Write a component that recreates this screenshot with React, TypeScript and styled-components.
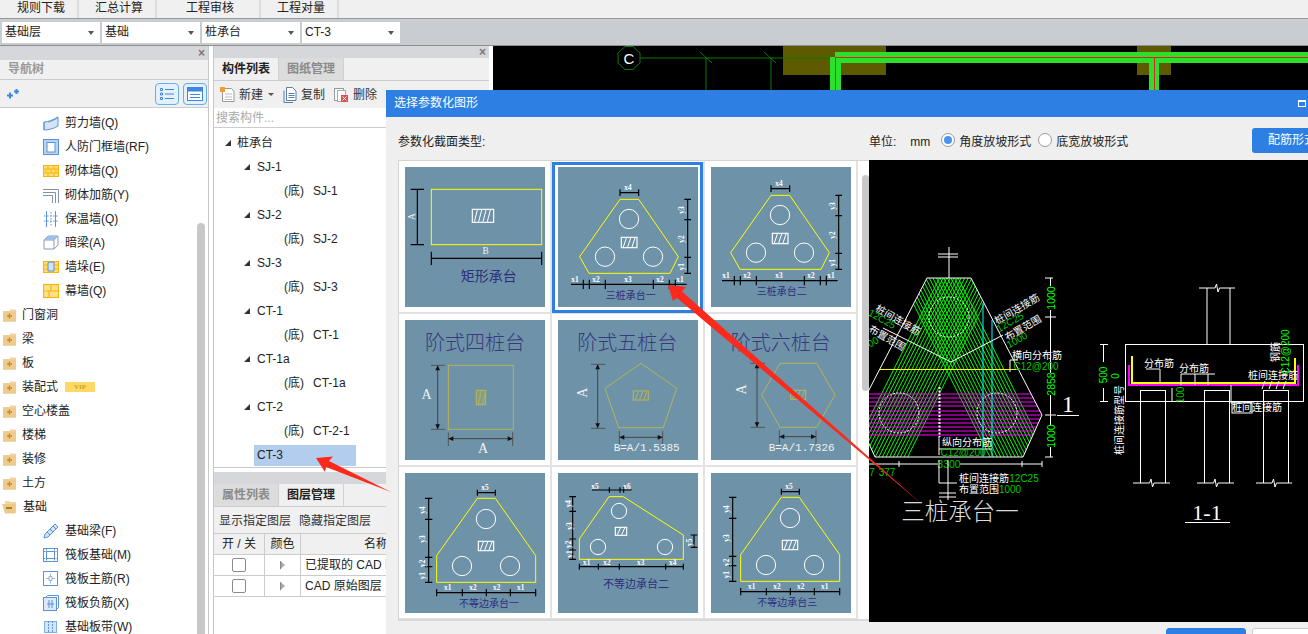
import React from 'react';
import styled, { createGlobalStyle } from 'styled-components';

const FONT = '"Liberation Sans", "Noto Sans CJK SC", sans-serif';

const Global = createGlobalStyle`
  html, body { margin: 0; padding: 0; width: 1308px; height: 634px; overflow: hidden; background: #fff; }
  * { box-sizing: border-box; }
`;

const Page = styled.div`
  position: relative; width: 1308px; height: 634px; overflow: hidden;
  font: 12px/1 ${FONT}; color: #222; display: flex; flex-direction: column; background: #fff;
`;
const MenuBar = styled.div`
  height: 19px; flex: none; background: #f0f0f0; border-bottom: 1px solid #9a9a9a; display: flex;
`;
const MenuItem = styled.div<{ $w: number; $pad: number }>`
  width: ${p => p.$w}px; padding-left: ${p => p.$pad}px; height: 18px; line-height: 17px; white-space: nowrap;
  border-right: 2px solid #dcdcdc;
`;
const ComboBar = styled.div`
  height: 27px; flex: none; background: #c9ccd1; border-bottom: 1px solid #8f8f8f;
  display: flex; gap: 2px; padding: 3px 0 0 2px;
`;
const Combo = styled.div`
  width: 98px; height: 21px; background: #fff; padding-left: 3px; line-height: 21px; position: relative;
  &::after {
    content: ''; position: absolute; right: 6px; top: 9px;
    border: 3.5px solid transparent; border-top: 4px solid #555; border-bottom: 0;
  }
`;
const Main = styled.div`
  flex: 1; min-height: 0; display: flex;
`;
const LeftPanel = styled.div`
  width: 209px; flex: none; border-right: 1px solid #c8c8c8; display: flex; flex-direction: column; position: relative;
`;
const PaneHead = styled.div<{ $h: number }>`
  height: ${p => p.$h}px; flex: none; background: #d6d7db; position: relative; color: #777;
  font-size: 12px; line-height: ${p => p.$h}px; text-align: right; padding-right: 3px; font-weight: bold;
`;
const NavTitle = styled.div`
  height: 20px; flex: none; background: #f0f0f0; border-bottom: 1px solid #ccc; color: #999;
  font-weight: bold; padding-left: 8px; line-height: 19px;
`;
const NavTools = styled.div`
  height: 28px; flex: none; background: #f0f0f0; border-bottom: 1px solid #ccc;
  display: flex; align-items: center; gap: 4px; padding-left: 7px;
`;
const ToolToggle = styled.div<{ $first?: boolean }>`
  width: 24px; height: 22px; border: 1px solid #62aef0; border-radius: 4px; background: #e4f1fc;
  display: flex; align-items: center; justify-content: center; margin-left: ${p => (p.$first ? 'auto' : '0')};
  margin-right: ${p => (p.$first ? '0' : '1px')};
`;
const NavList = styled.div`
  flex: 1; min-height: 0; overflow: hidden; padding-top: 3px; background: #fff;
`;
const NavRow = styled.div<{ $child?: boolean }>`
  height: 24px; display: flex; align-items: center; white-space: nowrap;
  padding-left: ${p => (p.$child ? 43 : 3)}px; gap: ${p => (p.$child ? 6 : 5)}px;
`;
const Vip = styled.span`
  width: 30px; height: 10px; margin-left: 2px; background: #ffd966; color: #c9a227;
  font: bold 7px/10px "Liberation Serif", serif; text-align: center;
`;
const Scroll = styled.div<{ $x: number; $y: number; $h: number; $w: number }>`
  position: absolute; left: ${p => p.$x}px; top: ${p => p.$y}px; width: ${p => p.$w}px; height: ${p => p.$h}px;
  background: #c8c8c8; border-radius: 4px;
`;
const MidPanel = styled.div`
  width: 276px; margin: 0 4px; flex: none; border-left: 1px solid #c8c8c8; display: flex; flex-direction: column;
`;
const TabRow = styled.div`
  height: 23px; flex: none; background: #f0f0f0; border-bottom: 1px solid #ccc; display: flex;
`;
const Tab = styled.div<{ $on?: boolean }>`
  width: 65px; height: 22px; line-height: 22px; text-align: center; font-weight: bold;
  background: ${p => (p.$on ? '#f0f0f0' : '#dcdcdc')}; color: ${p => (p.$on ? '#222' : '#8a8a8a')};
  border-right: 1px solid #d0d0d0;
`;
const MidTools = styled.div`
  height: 27px; flex: none; background: #f0f0f0; display: flex; align-items: center; padding-left: 6px;
`;
const ToolBtn = styled.span<{ $gap?: number; $ml?: number }>`
  display: inline-flex; align-items: center; gap: ${p => p.$gap ?? 5}px; margin-left: ${p => p.$ml ?? 0}px; color: #333;
`;
const Caret = styled.span`
  margin-left: 2px; border: 3px solid transparent; border-top: 3px solid #555; border-bottom: 0;
`;
const Search = styled.div`
  height: 20px; flex: none; background: #fff; border-bottom: 1px solid #ccc; color: #aaa;
  padding-left: 2px; line-height: 20px;
`;
const Tree = styled.div`
  height: 340px; flex: none; border-bottom: 1px solid #c8c8c8; padding-top: 3px; overflow: hidden; background: #fff;
`;
const TreeRow = styled.div<{ $level: number }>`
  height: 24px; display: flex; align-items: center; white-space: nowrap; gap: ${p => (p.$level === 0 ? 6 : p.$level === 1 ? 7 : 4)}px;
  padding-left: ${p => [11, 30, 70][p.$level]}px;
`;
const Tri = styled.span`
  width: 6px; height: 6px; background: #333; clip-path: polygon(100% 0, 100% 100%, 0 100%); flex: none;
`;
const SelSpacer = styled.span`
  width: 6px; flex: none;
`;
const TreeLabel = styled.span<{ $sel?: boolean }>`
  ${p => p.$sel ? 'background:#b3cdee; width:102px; height:21px; line-height:21px; padding-left:3px; margin-left:-3px;' : ''}
`;
const Paren = styled.span`
  margin-right: 5px;
`;
const LowerGap = styled.div`
  height: 4px; flex: none;
`;
const LayerTools = styled.div`
  height: 27px; flex: none; background: #f0f0f0; border-bottom: 1px solid #ccc; display: flex; gap: 8px;
  align-items: center; padding: 1px 0 0 5px; color: #333;
`;
const Table = styled.div`
  display: grid; grid-template-columns: 51px 36px 189px; grid-auto-rows: 21px; background: #fff;
`;
const Th = styled.div<{ $right?: boolean }>`
  background: #f0f0f0; border-right: 1px solid #ccc; border-bottom: 1px solid #ccc; line-height: 20px;
  height: 21px; text-align: ${p => (p.$right ? 'left' : 'center')}; padding-left: ${p => (p.$right ? 63 : 0)}px; white-space: nowrap;
`;
const Td = styled.div`
  border-right: 1px solid #ccc; border-bottom: 1px solid #ccc; height: 21px; display: flex; align-items: center;
  justify-content: center;
`;
const TdText = styled(Td)`
  justify-content: flex-start; padding-left: 4px; white-space: nowrap; overflow: hidden;
`;
const Check = styled.span`
  width: 14px; height: 14px; border: 1px solid #8a8a8a; border-radius: 2px; background: #fff;
`;
const OpenArrow = styled.span`
  width: 5px; height: 9px; position: relative;
  border-left: 1px solid #888; clip-path: polygon(0 0, 100% 50%, 0 100%);
  background: #aaa;
`;
const Canvas = styled.div`
  flex: 1; min-width: 0; background: #000; height: 44px;
`;
const CanvasSvg = styled.svg`
  display: block;
`;

const Dialog = styled.div`
  position: absolute; left: 386px; top: 90px; right: 0; bottom: 0; background: #efefef; overflow: hidden;
  display: flex; flex-direction: column;
`;
const DlgTitle = styled.div`
  height: 27px; flex: none; background: #2d7fe3; color: #fff; line-height: 27px; padding: 0 2px 0 8px;
  display: flex; justify-content: space-between; align-items: center;
`;
const MaxIcon = styled.span`
  width: 8px; height: 7px; border: 1px solid #fff; border-top-width: 2px;
`;
const DlgTop = styled.div`
  height: 43px; flex: none; padding-left: 12px; display: flex; align-items: center;
`;
const DlgLabel = styled.div`
  width: 471px; flex: none; color: #222; padding-top: 7px;
`;
const Unit = styled.div`
  display: flex; align-items: center; padding-top: 7px;
`;
const UnitValue = styled.span`
  margin-left: 14px;
`;
const Radio = styled.span<{ $on?: boolean }>`
  width: 14px; height: 14px; border-radius: 50%; border: 1px solid #999; background: #fff;
  margin: -4px 4px 0 ${p => (p.$on ? 11 : 7)}px;
  display: flex; align-items: center; justify-content: center;
  &::after { content: ''; width: 8px; height: 8px; border-radius: 50%; background: ${p => (p.$on ? '#4a93ee' : 'transparent')}; }
`;
const Primary = styled.div`
  width: 80px; height: 25px; margin-left: auto; margin-right: -24px; margin-top: 4px; background: #2d7fe3; color: #fff; border-radius: 3px;
  line-height: 25px; padding-left: 16px; flex: none; white-space: nowrap;
`;
const DlgBody = styled.div`
  height: 462px; flex: none; padding-left: 12px; display: flex;
`;
const GridBox = styled.div`
  width: 471px; height: 461px; flex: none; background: #fff; border-top: 1px solid #d4d4d4; border-left: 1px solid #d4d4d4;
  border-bottom: 2px solid #d8d8d8; position: relative; overflow: hidden;
`;
const ThumbGrid = styled.div`
  display: grid; grid-template-columns: repeat(3, 153px); grid-auto-rows: 153px;
`;
const Cell = styled.div<{ $sel?: boolean }>`
  position: relative; padding: 6px 0 0 6px; border-right: 2px solid #e2e2e2; border-bottom: 2px solid #e2e2e2;
  ${p => p.$sel ? `&::after { content: ''; position: absolute; left: 0; top: 1px; right: 0; bottom: -1px; border: 3px solid #2d7fe3; }` : ''}
`;
const ThumbSvg = styled.svg`
  display: block; width: 140px; height: 140px; background: #6e93a9;
`;
const Preview = styled.div`
  flex: 1; min-width: 0; background: #000; height: 462px;
`;
const PreviewSvg = styled.svg`
  display: block; width: 439px; height: 462px;
`;
const DlgFoot = styled.div`
  flex: 1; display: flex; gap: 6px; padding: 6px 0 0 780px;
`;
const FootBtn = styled.div<{ $white?: boolean }>`
  width: 80px; height: 24px; flex: none; border-radius: 3px;
  background: ${p => (p.$white ? '#fff' : '#2d7fe3')}; border: 1px solid ${p => (p.$white ? '#ccc' : '#2d7fe3')};
`;
const Overlay = styled.svg`
  position: absolute; left: 0; top: 0; width: 1308px; height: 634px; pointer-events: none;
`;
const CadLabel = styled.text<{ $size: number; $serif?: boolean; $thin?: boolean }>`
  font-family: ${p => (p.$serif ? '"Liberation Serif", "Noto Sans CJK SC", serif' : FONT)};
  font-size: ${p => p.$size}px; text-anchor: middle; dominant-baseline: central;
  font-weight: ${p => (p.$thin ? 300 : 400)};
`;
const DimText = styled.text`
  font: bold 22px "Liberation Serif", serif; fill: #fff; text-anchor: middle; dominant-baseline: central;
`;
const ThumbTitle = styled.text<{ $size: number }>`
  font-family: "Noto Sans CJK SC", sans-serif; font-size: ${p => p.$size}px; fill: #2f2d7c; text-anchor: middle; dominant-baseline: central;
`;
const BigTitle = styled.text`
  font-family: "Noto Sans CJK SC", sans-serif; font-weight: 300; font-size: 60px; fill: #38397f; text-anchor: middle; dominant-baseline: central;
`;
const FormulaText = styled.text`
  font: 33px "Liberation Mono", monospace; fill: #f2f2f2; text-anchor: middle; dominant-baseline: central;
`;
const SerifA = styled.text<{ $size?: number }>`
  font: ${p => p.$size ?? 42}px "Liberation Serif", serif; fill: #f2f2f2; text-anchor: middle; dominant-baseline: central;
`;

/* ---------- small icons ---------- */
const IconBox = styled.svg`
  flex: none;
`;
const I = ({ children }: { children: React.ReactNode }) => (
  <IconBox width="16" height="16" viewBox="0 0 16 16" fill="none">{children}</IconBox>
);
const B = '#5b93d8';
const Y = '#f6b60c';
const icons: Record<string, React.ReactNode> = {
  shear: <I><path d="M1 7c4 0 9-2 14-5v9c-5 3-10 4-14 4z" fill="#d5e4f5" stroke={B} /><path d="M1 7v8M5 7c4-1 7-2 10-5" stroke={B} /></I>,
  door: <I><rect x="0.5" y="0.5" width="15" height="15" fill="#b9d4f1" stroke={B} /><rect x="4" y="3.5" width="8" height="9.5" fill="#fff" stroke={B} /></I>,
  brick: <I><rect x="0.5" y="2.5" width="15" height="11" fill="#ffdc74" stroke={Y} /><path d="M1 6h14M1 10h14M5 3v3M11 3v3M8 6v4M3 6v4M13 6v4M5 10v3M11 10v3" stroke={Y} /></I>,
  rebar: <I><path d="M0 2.5h15.5V16M0 5.5h12.500V16M0 8.500h9.500V16" stroke="#7d93a8" /></I>,
  heat: <I><path d="M3.500 0v16M12.500 0v16" stroke={B} /><path d="M8 1v14M1 5h14M1 10h14" stroke={B} strokeDasharray="1.500 1.500" /></I>,
  beam: <I><path d="M1 5l4-4h10v9l-4 4H1z" fill="#fff" stroke="#8a9db0" /><path d="M1 5h10v9M11 5l4-4" stroke="#8a9db0" /><path d="M5 1h10L11 5H1z" fill="#9cc2ea" /></I>,
  pier: <I><rect x="0.5" y="2.500" width="15" height="11" fill="#ffdc74" stroke={Y} /><path d="M1 6h14M1 10h14" stroke={Y} /><path d="M5 4l2-1h4v9H5z" fill="#cfe2f6" stroke={B} /></I>,
  curtain: <I><rect x="0.500" y="1.500" width="15" height="13" fill="#ffe08a" stroke={Y} strokeWidth="1.200" /><path d="M8 2v6M1 8h14M6 8v6" stroke={Y} strokeWidth="1.200" /></I>,
  fbeam: <I><path d="M1 15l1-4L12 1l3 3L5 14z" fill="#cfe2f6" stroke={B} /><path d="M4 9l3 3M7 6l3 3M10 3l3 3" stroke={B} /></I>,
  raft: <I><rect x="0.500" y="1.500" width="14" height="13" fill="#fff" stroke={B} /><rect x="3.500" y="4.500" width="8" height="7" stroke={B} /><path d="M1 4.500h14M1 11.500h14M3.500 2v12M11.500 2v12" stroke={B} strokeDasharray="1.500 1" /></I>,
  rmain: <I><rect x="0.500" y="0.500" width="14" height="14" fill="#fff" stroke={B} /><path d="M7.500 2.500v3M7.500 9.500v3M3 7.500h3M9 7.500h3M6 5.500h3v4H6z" stroke="#9ab3cc" /></I>,
  rneg: <I><path d="M2.500 2.500l2-2h11v12l-2 2" stroke={B} /><rect x="0.500" y="2.500" width="13" height="13" fill="#dbe9f8" stroke={B} /><path d="M4 9h7M6 5v8M9 5v8" stroke={B} /></I>,
  band: <I><rect x="1.500" y="2.500" width="12" height="11" fill="#d5e5f7" stroke="#7db0e6" /><path d="M5.500 2v12M9.500 2v12" stroke="#5b93d8" strokeDasharray="2 1" /></I>,
};
const FolderIcon = styled.svg<{ $open?: boolean }>`
  flex: none; margin-left: ${p => (p.$open ? -1 : 0)}px;
`;
const Folder = ({ open }: { open?: boolean }) => (
  <FolderIcon $open={open} width={open ? 16 : 14} height="14" viewBox={open ? '0 0 16 14' : '0 0 14 14'}>
    {open ? <>
      <path d="M3 1h4l1 1h6v11H4z" fill="#f1d59e" />
      <path d="M0 4h14l-1 9.500H3z" fill="#edc988" />
      <rect x="4" y="7" width="6" height="2" fill="#a37c3c" />
    </> : <>
      <path d="M0 3h7V1.500h6V14H0z" fill="#ecd6a6" />
      <path d="M0 3.500h13V13H0z" fill="#eecb8d" />
      <path d="M4 8h5M6.500 5.500v5" stroke="#c98a2e" strokeWidth="1.400" />
    </>}
  </FolderIcon>
);

/* ---------- data ---------- */
const navItems: { t: string; i?: string; f?: boolean; open?: boolean; vip?: boolean }[] = [
  { t: '剪力墙(Q)', i: 'shear' }, { t: '人防门框墙(RF)', i: 'door' }, { t: '砌体墙(Q)', i: 'brick' },
  { t: '砌体加筋(Y)', i: 'rebar' }, { t: '保温墙(Q)', i: 'heat' }, { t: '暗梁(A)', i: 'beam' },
  { t: '墙垛(E)', i: 'pier' }, { t: '幕墙(Q)', i: 'curtain' },
  { t: '门窗洞', f: true }, { t: '梁', f: true }, { t: '板', f: true }, { t: '装配式', f: true, vip: true },
  { t: '空心楼盖', f: true }, { t: '楼梯', f: true }, { t: '装修', f: true }, { t: '土方', f: true },
  { t: '基础', f: true, open: true },
  { t: '基础梁(F)', i: 'fbeam' }, { t: '筏板基础(M)', i: 'raft' }, { t: '筏板主筋(R)', i: 'rmain' },
  { t: '筏板负筋(X)', i: 'rneg' }, { t: '基础板带(W)', i: 'band' },
];
const treeItems: { t: string; l: number; sel?: boolean }[] = [
  { t: '桩承台', l: 0 },
  { t: 'SJ-1', l: 1 }, { t: 'SJ-1', l: 2 }, { t: 'SJ-2', l: 1 }, { t: 'SJ-2', l: 2 },
  { t: 'SJ-3', l: 1 }, { t: 'SJ-3', l: 2 }, { t: 'CT-1', l: 1 }, { t: 'CT-1', l: 2 },
  { t: 'CT-1a', l: 1 }, { t: 'CT-1a', l: 2 }, { t: 'CT-2', l: 1 }, { t: 'CT-2-1', l: 2 },
  { t: 'CT-3', l: 1, sel: true },
];

/* ---------- thumbnails (420 unit box = 140 px) ---------- */
const hd = (y: number, ticks: number[], h = 12, x1?: number, x2?: number) =>
  `M${x1 ?? ticks[0]} ${y}H${x2 ?? ticks[ticks.length - 1]}` + ticks.map(t => `M${t} ${y - h}V${y + h}`).join('');
const vd = (x: number, ticks: number[], w = 12) =>
  `M${x} ${ticks[0]}V${ticks[ticks.length - 1]}` + ticks.map(t => `M${x - w} ${t}H${x + w}`).join('');

const Hatch = ({ x, y, w, h, c = '#fff' }: { x: number; y: number; w: number; h: number; c?: string }) => {
  const n = Math.floor(w / 13);
  let d = '';
  for (let i = 0; i < n; i++) d += `M${x + 6 + i * 13} ${y + h - 2}L${x + 6 + i * 13 + 9} ${y + 2}`;
  return <>
    <rect x={x} y={y} width={w} height={h} fill="none" stroke={c} strokeWidth="3.500" />
    <path d={d} stroke={c} strokeWidth="3" />
  </>;
};
const Pile = ({ x, y, r = 29 }: { x: number; y: number; r?: number }) =>
  <circle cx={x} cy={y} r={r} fill="none" stroke="#fff" strokeWidth="3" />;
const Labels = ({ items }: { items: [string, number, number, boolean?][] }) => <>
  {items.map(([s, x, y, rot], i) =>
    <DimText key={i} x={x} y={y} transform={rot ? `rotate(-90 ${x} ${y})` : undefined}>{s}</DimText>)}
</>;

const Rect1 = () => <>
  <rect x="79" y="67" width="331" height="166" fill="none" stroke="#ffff00" strokeWidth="3" />
  <path d={vd(37, [67, 233], 20)} stroke="#000" strokeWidth="3.500" />
  <path d={hd(274, [79, 410], 20)} stroke="#000" strokeWidth="3.500" />
  <Hatch x={202} y={127} w={64} h={39} />
  <SerifA $size={28} x={20} y={149} transform="rotate(-90 20 149)">A</SerifA>
  <SerifA $size={28} x={242} y={253}>B</SerifA>
  <ThumbTitle $size={42} x={251} y={324}>矩形承台</ThumbTitle>
</>;
const ThreePile = ({ dx = 0, dy = 0, by = 0, title, tx, ty }: { dx?: number; dy?: number; by?: number; title: string; tx: number; ty: number }) => (
  <>
    <g transform={`translate(${dx} ${dy})`}>
      <polygon points="186,97 242,97 361,269 336,319 93,319 65,269" fill="none" stroke="#ffff00" strokeWidth="3" />
      <Pile x={213} y={156} /><Pile x={141} y={269} /><Pile x={285} y={269} />
      <Hatch x={190} y={211} w={47} h={31} />
      <path d={hd(77, [186, 242], 10)} stroke="#000" strokeWidth="3.500" />
      <path d={vd(389, [97, 158, 271, 319], 10)} stroke="#000" strokeWidth="3.500" />
      <Labels items={[['x4', 210, 62], ['y3', 371, 129, true], ['y2', 371, 216, true], ['y1', 371, 299, true]]} />
    </g>
    <g transform={`translate(${dx} ${by})`}>
      <path d={hd(352, [76, 94, 142, 286, 334, 352], 14, 39, 386)} stroke="#000" strokeWidth="3.500" />
      <Labels items={[['x1', 51, 337], ['x2', 114, 337], ['x3', 210, 337], ['x2', 306, 337], ['x1', 366, 337]]} />
    </g>
    <ThumbTitle $size={30} x={tx} y={ty}>{title}</ThumbTitle>
  </>
);
const Arrowed = ({ x1, y1, x2, y2 }: { x1: number; y1: number; x2: number; y2: number }) => {
  const vertical = x1 === x2;
  return <>
    <line x1={x1} y1={y1} x2={x2} y2={y2} stroke="#444" strokeWidth="3" />
    {vertical
      ? <path d={`M${x1} ${y1}l-7 15h14zM${x1} ${y2}l-7 -15h14z`} fill="#111" />
      : <path d={`M${x1} ${y1}l15 -7v14zM${x2} ${y1}l-15 -7v14z`} fill="#111" />}
  </>;
};
const OL = '#b3b357';
const Step4 = () => <>
  <BigTitle x={210} y={65}>阶式四桩台</BigTitle>
  <rect x="130" y="136" width="195" height="192" fill="none" stroke={OL} strokeWidth="3" />
  <Hatch x={214} y={211} w={28} h={43} c={OL} />
  <rect x="214" y="211" width="28" height="43" fill={OL} opacity=".35" />
  <Arrowed x1={98} y1={136} x2={98} y2={328} />
  <path d="M78 136h42M78 328h42M130 337v41M323 337v41" stroke="#555" strokeWidth="3" />
  <Arrowed x1={130} y1={356} x2={323} y2={356} />
  <SerifA x={65} y={223}>A</SerifA>
  <SerifA x={234} y={385}>A</SerifA>
</>;
const Step5 = () => <>
  <BigTitle x={208} y={65}>阶式五桩台</BigTitle>
  <polygon points="249,130 356,205 316,323 182,323 141,205" fill="none" stroke={OL} strokeWidth="3" />
  <Hatch x={226} y={213} w={45} h={27} c={OL} />
  <Arrowed x1={119} y1={133} x2={119} y2={325} />
  <path d="M99 133h44M99 325h44M184 333v41M314 333v41" stroke="#555" strokeWidth="3" />
  <Arrowed x1={184} y1={352} x2={314} y2={352} />
  <SerifA x={74} y={218} transform="rotate(-90 74 218)">A</SerifA>
  <FormulaText x={266} y={384}>B=A/1.5385</FormulaText>
</>;
const Step6 = () => <>
  <BigTitle x={209} y={65}>阶式六桩台</BigTitle>
  <polygon points="207,130 317,130 372,225 317,322 207,322 152,225" fill="none" stroke={OL} strokeWidth="3" />
  <Hatch x={239} y={211} w={45} h={27} c={OL} />
  <Arrowed x1={138} y1={130} x2={138} y2={322} />
  <path d="M118 130h44M118 322h44M205 331v41M315 331v41" stroke="#555" strokeWidth="3" />
  <Arrowed x1={205} y1={350} x2={315} y2={350} />
  <SerifA x={92} y={208} transform="rotate(-90 92 208)">A</SerifA>
  <FormulaText x={272} y={384}>B=A/1.7326</FormulaText>
</>;
const Uneq = ({ dx = 0, dy = 0, title, tx, ty }: { dx?: number; dy?: number; title: string; tx: number; ty: number }) => (
  <>
    <g transform={`translate(${dx} ${dy})`}>
      <polygon points="217,76 271,76 392,248 392,328 95,328 95,248" fill="none" stroke="#ffff00" strokeWidth="3" />
      <Pile x={243} y={138} /><Pile x={171} y={279} /><Pile x={315} y={279} />
      <Hatch x={220} y={205} w={46} h={28} />
      <path d={hd(59, [217, 271], 9)} stroke="#000" strokeWidth="3.500" />
      <path d={vd(71, [76, 139, 253, 281, 328], 11)} stroke="#000" strokeWidth="3.500" />
      <path d={hd(359, [95, 172, 244, 316, 392], 11)} stroke="#000" strokeWidth="3.500" />
      <Labels items={[['x5', 240, 44], ['y4', 52, 111, true], ['y3', 52, 198, true], ['y2', 52, 271, true], ['y1', 52, 308, true],
        ['x1', 128, 343], ['x2', 204, 343], ['x2', 275, 343], ['x1', 347, 343]]} />
    </g>
    <ThumbTitle $size={30} x={tx} y={ty}>{title}</ThumbTitle>
  </>
);
const Uneq2 = () => <>
  <polygon points="153,71 196,71 376,186 376,259 64,259 64,198" fill="none" stroke="#ffff00" strokeWidth="3" />
  <Pile x={183} y={114} r={23} /><Pile x={120} y={222} r={23} /><Pile x={321} y={222} r={23} />
  <Hatch x={172} y={163} w={34} h={24} />
  <path d={hd(51, [154, 186, 197], 8, 102, 221)} stroke="#000" strokeWidth="3.500" />
  <path d={vd(44, [71, 115, 198, 231, 259], 10)} stroke="#000" strokeWidth="3.500" />
  <path d={vd(408, [186, 223], 10)} stroke="#000" strokeWidth="3.500" />
  <path d={hd(281, [64, 121, 184, 323, 376], 9)} stroke="#000" strokeWidth="3.500" />
  <Labels items={[['x5', 111, 39], ['x6', 207, 39], ['y4', 33, 92, true], ['y3', 33, 159, true], ['y2', 33, 214, true], ['y1', 33, 243, true],
    ['y5', 394, 208, true], ['x1', 86, 267], ['x2', 147, 267], ['x3', 248, 267], ['x4', 344, 267]]} />
  <ThumbTitle $size={33} x={234} y={331}>不等边承台二</ThumbTitle>
</>;

const thumbs: React.ReactNode[] = [
  <Rect1 />,
  <ThreePile title="三桩承台一" tx={218} ty={382} />,
  <ThreePile dx={-6} dy={-12} by={-11} title="三桩承台二" tx={212} ty={369} />,
  <Step4 />, <Step5 />, <Step6 />,
  <Uneq title="不等边承台一" tx={252} ty={388} />,
  <Uneq2 />,
  <Uneq dx={-6} dy={-3} title="不等边承台三" tx={229} ty={386} />,
];

/* ---------- CAD preview, page coordinates ---------- */
const T = ({ x, y, s = 11, c = '#fff', r = 0, children, serif, thin }: { x: number; y: number; s?: number; c?: string; r?: number; children: React.ReactNode; serif?: boolean; thin?: boolean }) => (
  <CadLabel $size={s} $serif={serif} $thin={thin} x={x} y={y} fill={c} transform={r ? `rotate(${r} ${x} ${y})` : undefined}>{children}</CadLabel>
);
const Break = ({ x1, x2, y }: { x1: number; x2: number; y: number }) => {
  const m = (x1 + x2) / 2;
  return <path d={`M${x1} ${y}H${m - 2}l1.500 -4l1.500 8l1.500 -4H${x2}`} stroke="#fff" fill="none" />;
};
const hatchLines = (() => {
  const out: string[] = [];
  for (let off = -29; off <= 29; off += 3.6) {
    out.push(`M${949 + off + 0.5 * (260 - 317)} 260L${949 + off + 0.5 * (470 - 317)} 470`);
    out.push(`M${949 + off - 0.5 * (260 - 317)} 260L${949 + off - 0.5 * (470 - 317)} 470`);
  }
  return out.join('');
})();
const magentaYs = [394, 398, 402, 406, 411, 415, 419, 423, 427, 431, 435];
const Cad = () => (
  <PreviewSvg viewBox="869 160 439 462">
    <defs>
      <clipPath id="hex"><polygon points="927,278 971,278 1042,415 1023,457 875,457 856,415" /></clipPath>
    </defs>
    <g clipPath="url(#hex)">
      <path d={hatchLines} stroke="#00ff00" strokeWidth="1" fill="none" />
      <path d={magentaYs.map(y => `M860 ${y}H1045`).join('')} stroke="#ff00ff" strokeWidth="1" />
    </g>
    <polygon points="927,278 971,278 1042,415 1023,457 875,457 856,415" fill="none" stroke="#fff" />
    <path d="M949 247V278M938 254H958M938 257H958" stroke="#fff" />
    <circle cx="949" cy="317" r="20" fill="none" stroke="#fff" strokeDasharray="2 1.500" />
    <circle cx="899" cy="413" r="20" fill="none" stroke="#fff" strokeDasharray="2 1.500" />
    <circle cx="997" cy="413" r="20" fill="none" stroke="#fff" strokeDasharray="2 1.500" />
    <path d="M880 369.500H1018" stroke="#ffff00" />
    <path d="M983 303V457M992 320V457" stroke="#00ffff" />
    <path d="M883 328L951 362L1003 335" stroke="#fff" fill="none" />
    <path d="M939.500 387V437" stroke="#fff" strokeDasharray="2 1.500" strokeWidth="2" />
    <path d="M939 437V455M939 449H992M1018 360H1010V372" stroke="#fff" fill="none" />
    <path d="M1050.500 278V286M1050.500 310V373M1050.500 395V425M1050.500 447V457M1045 278H1053M1045 317H1056M1045 415H1056M1045 457H1053" stroke="#fff" />
    <T x={1050.500} y={298} s={10.500} c="#00ff00" r={-90}>1000</T>
    <T x={1050.500} y={384} s={10.500} c="#00ff00" r={-90}>2858</T>
    <T x={1050.500} y={436} s={10.500} c="#00ff00" r={-90}>1000</T>
    <T x={1068} y={404} s={24} serif>1</T>
    <path d="M1057 415.500H1079" stroke="#fff" />
    <T x={1017} y={309} s={10} r={-30}>桩间连接筋</T>
    <T x={1010} y={322} s={10} r={-30} c="#00c800">12C25</T>
    <T x={1023} y={328} s={10} r={-30}>布置范围</T>
    <T x={1017} y={340} s={10} r={-30} c="#00c800">1000</T>
    <T x={898} y={320} s={10} r={30}>桩间连接筋</T>
    <T x={882} y={319} s={10} r={30} c="#00c800">12C25</T>
    <T x={887} y={338} s={10} r={30}>布置范围</T>
    <T x={873} y={342} s={10} r={-30} c="#00c800">00</T>
    <T x={1037} y={355} s={10}>横向分布筋</T>
    <T x={1036} y={366} s={10} c="#00c800">C12@200</T>
    <T x={967} y={442} s={10}>纵向分布筋</T>
    <T x={963} y={452} s={10} c="#00c800">C12@200</T>
    <path d="M869 464H1042M899 461V467M940 461V467M1022 461V467M1042 461V467" stroke="#fff" />
    <rect x="938" y="458" width="22" height="12" fill="#000" />
    <T x={949} y={464} s={10.500} c="#00c800">3300</T>
    <T x={872} y={472} s={10} c="#00c800">7</T>
    <T x={887} y={472} s={10} c="#00c800">377</T>
    <path d="M939 460V483H957M948 460V500M939 493H956M939 497H956" stroke="#fff" fill="none" />
    <T x={984} y={478} s={10}>桩间连接筋</T>
    <T x={1024} y={478} s={10} c="#00c800">12C25</T>
    <T x={979} y={489} s={10}>布置范围</T>
    <T x={1010} y={489} s={10} c="#00c800">1000</T>
    <T x={960} y={512} s={23.500} c="#dcdcdc" thin>三桩承台一</T>

    {/* section 1-1 */}
    <path d="M1207 288V344M1230 288V344" stroke="#fff" />
    <Break x1={1199} x2={1235} y={288} />
    <rect x="1125.500" y="344.500" width="178" height="57" fill="none" stroke="#fff" />
    <path d="M1129 365V385H1298V365" fill="none" stroke="#ff00ff" strokeWidth="2" />
    <path d="M1132 356V383H1295V358" fill="none" stroke="#ffff00" strokeWidth="2" />
    <path d="M1140.500 390V483M1165.500 390V483M1140 390.500H1166M1204.500 390V483M1229.500 390V483M1204 390.500H1230M1263.500 390V483M1288.500 390V483M1263 390.500H1289" stroke="#fff" />
    <Break x1={1133} x2={1170} y={483} />
    <Break x1={1197} x2={1234} y={483} />
    <Break x1={1256} x2={1292} y={483} />
    <path d="M1103.500 344V402M1100 344.500H1108M1100 401.500H1108" stroke="#fff" />
    <rect x="1098" y="362" width="11" height="26" fill="#000" />
    <T x={1103} y={375} s={10} c="#00ff00" r={-90}>500</T>
    <T x={1115} y={376} s={10} c="#00ff00" r={-90}>0</T>
    <T x={1119} y={420} s={10} r={-90}>桩间连接筋型号</T>
    <T x={1159} y={363} s={10}>分布筋</T>
    <path d="M1146 369H1160V383" stroke="#fff" fill="none" />
    <T x={1194} y={368} s={10}>分布筋</T>
    <path d="M1181 374H1215M1181 374V385M1195 374V385M1208 374V385" stroke="#fff" fill="none" />
    <T x={1273} y={375} s={10}>桩间连接筋</T>
    <path d="M1265 381l-3 8M1272 381l-3 8M1279 381l-3 8M1286 381l-3 8" stroke="#fff" />
    <T x={1180} y={395} s={10} c="#00c800" r={-90}>100</T>
    <path d="M1172 388V401" stroke="#fff" />
    <T x={1275} y={352} s={10} r={-90}>钢筋</T>
    <T x={1285} y={352} s={10} c="#00ff00" r={-90}>C12@200</T>
    <path d="M1231 385V403H1252" stroke="#fff" fill="none" />
    <T x={1257} y={407} s={10}>桩间连接筋</T>
    <rect x="1232" y="402" width="20" height="11" fill="none" stroke="#fff" />
    <T x={1207} y={512} s={22} serif>1-1</T>
    <path d="M1185 522.500H1230" stroke="#fff" />
  </PreviewSvg>
);

const TopCad = () => (
  <CanvasSvg width="815" height="44" viewBox="493 46 815 44">
    <rect x="783" y="46" width="103" height="29" fill="#5e5a00" />
    <rect x="1137" y="46" width="34" height="29" fill="#5e5a00" />
    <path d="M706 58V90M771 58V90M700 52L712 63M764 52L776 63M640 58H836" stroke="#0b7a0b" />
    <polygon points="625,46.500 633,46.500 640,53 640,63 633,69.500 625,69.500 618,63 618,53" fill="none" stroke="#0b7a0b" />
    <CadLabel $size={15} x={629} y={58} fill="#fff">C</CadLabel>
    <path d="M835 52H1308V63H835zM830 57H841V90H830zM1149 63H1159V90H1149z" fill="#2bdf2b" />
    <path d="M835 57.500H1308M835.500 57V90M1154.500 57V90" stroke="#e02020" />
  </CanvasSvg>
);

export default function App() {
  return (
    <Page>
      <Global />
      <MenuBar>
        <MenuItem $w={79} $pad={17}>规则下载</MenuItem>
        <MenuItem $w={78} $pad={16}>汇总计算</MenuItem>
        <MenuItem $w={104} $pad={29}>工程审核</MenuItem>
        <MenuItem $w={78} $pad={16}>工程对量</MenuItem>
      </MenuBar>
      <ComboBar>
        <Combo>基础层</Combo>
        <Combo>基础</Combo>
        <Combo>桩承台</Combo>
        <Combo>CT-3</Combo>
      </ComboBar>
      <Main>
        <LeftPanel>
          <PaneHead $h={14}>×</PaneHead>
          <NavTitle>导航树</NavTitle>
          <NavTools>
            <svg width="12" height="10" viewBox="0 0 12 10">
              <path d="M0 6.500h6M3 3.500v6M7 2.500h5M9.500 0v5" stroke="#3f86dd" strokeWidth="2" />
            </svg>
            <ToolToggle $first>
              <svg width="14" height="14" viewBox="0 0 14 14"><path d="M0.500 1.500h2v2h-2zM0.500 6h2v2h-2zM0.500 10.500h2v2h-2z" fill="none" stroke="#3f86dd" /><path d="M5 2.500h9M5 7h9M5 11.500h9" stroke="#3f86dd" /></svg>
            </ToolToggle>
            <ToolToggle>
              <svg width="16" height="14" viewBox="0 0 16 14"><rect x="0.500" y="0.500" width="15" height="13" fill="#fff" stroke="#3f86dd" /><rect x="0.500" y="0.500" width="15" height="4" fill="#3f86dd" /><path d="M3 7.500h10M3 10.500h10" stroke="#3f86dd" /></svg>
            </ToolToggle>
          </NavTools>
          <NavList>
            {navItems.map((n, i) => (
              <NavRow key={i} $child={!n.f}>
                {n.f ? <Folder open={n.open} /> : icons[n.i!]}
                <span>{n.t}</span>
                {n.vip && <Vip>VIP</Vip>}
              </NavRow>
            ))}
          </NavList>
          <Scroll $x={197} $y={177} $w={8} $h={430} />
        </LeftPanel>
        <MidPanel>
          <PaneHead $h={12}>×</PaneHead>
          <TabRow><Tab $on>构件列表</Tab><Tab>图纸管理</Tab></TabRow>
          <MidTools>
            <ToolBtn $gap={3}>
              <svg width="16" height="16" viewBox="0 0 16 16"><path d="M2.500 1.500h9l2.500 3v10h-11.500z" fill="#fff" stroke="#999" /><path d="M5 7h7M5 10h7M5 12.500h7" stroke="#bbb" /><rect x="0" y="0" width="5" height="5" fill="#f39c34" /></svg>
              新建<Caret />
            </ToolBtn>
            <ToolBtn $ml={9} $gap={4}>
              <svg width="14" height="16" viewBox="0 0 14 16"><path d="M1 3.500v12h9" fill="none" stroke="#5b7fa8" /><path d="M3.500 0.500h6l3.500 3.500v9.500h-9.500z" fill="#fff" stroke="#5b7fa8" /><path d="M5.500 6.500h6M5.500 8.500h6M5.500 10.500h6" stroke="#5b7fa8" /></svg>
              复制
            </ToolBtn>
            <ToolBtn $ml={9}>
              <svg width="14" height="16" viewBox="0 0 14 16"><rect x="0.500" y="1.500" width="9" height="12" fill="#fff" stroke="#999" /><rect x="3.500" y="3.500" width="8" height="11" fill="#fff" stroke="#aaa" /><rect x="7" y="8" width="7" height="7" fill="#e04b4b" /><path d="M8.500 9.500l4 4M12.500 9.500l-4 4" stroke="#fff" /></svg>
              删除
            </ToolBtn>
          </MidTools>
          <Search>搜索构件...</Search>
          <Tree>
            {treeItems.map((n, i) => (
              <TreeRow key={i} $level={n.l}>
                {n.l < 2 && !n.sel && <Tri />}
                {n.sel && <SelSpacer />}
                {n.l === 2 && <Paren>(底)</Paren>}
                <TreeLabel $sel={n.sel}>{n.t}</TreeLabel>
              </TreeRow>
            ))}
          </Tree>
          <LowerGap />
          <PaneHead $h={12} />
          <TabRow><Tab>属性列表</Tab><Tab $on>图层管理</Tab></TabRow>
          <LayerTools><span>显示指定图层</span><span>隐藏指定图层</span></LayerTools>
          <Table>
            <Th>开 / 关</Th><Th>颜色</Th><Th $right>名称</Th>
            <Td><Check /></Td><Td><OpenArrow /></Td><TdText>已提取的 CAD 图层</TdText>
            <Td><Check /></Td><Td><OpenArrow /></Td><TdText>CAD 原始图层</TdText>
          </Table>
        </MidPanel>
        <Canvas><TopCad /></Canvas>
      </Main>
      <Dialog>
        <DlgTitle>选择参数化图形<MaxIcon /></DlgTitle>
        <DlgTop>
          <DlgLabel>参数化截面类型:</DlgLabel>
          <Unit>
            单位:
            <UnitValue>mm</UnitValue>
            <Radio $on />角度放坡形式
            <Radio />底宽放坡形式
          </Unit>
          <Primary>配筋形式</Primary>
        </DlgTop>
        <DlgBody>
          <GridBox>
            <ThumbGrid>
              {thumbs.map((t, i) => (
                <Cell key={i} $sel={i === 1}>
                  <ThumbSvg viewBox="0 0 420 420">{t}</ThumbSvg>
                </Cell>
              ))}
            </ThumbGrid>
            <Scroll $x={463} $y={14} $w={7} $h={216} />
          </GridBox>
          <Preview><Cad /></Preview>
        </DlgBody>
        <DlgFoot><FootBtn /><FootBtn $white /></DlgFoot>
      </Dialog>
      <Overlay viewBox="0 0 1308 634">
        <polygon points="668,285 686,287 682,291.500 924,506 677,298 673,301" fill="#fb2a1c" />
        <polygon points="316,458 333,456.500 329,461 391,492 326,467 325,472" fill="#fb2a1c" />
      </Overlay>
    </Page>
  );
}
